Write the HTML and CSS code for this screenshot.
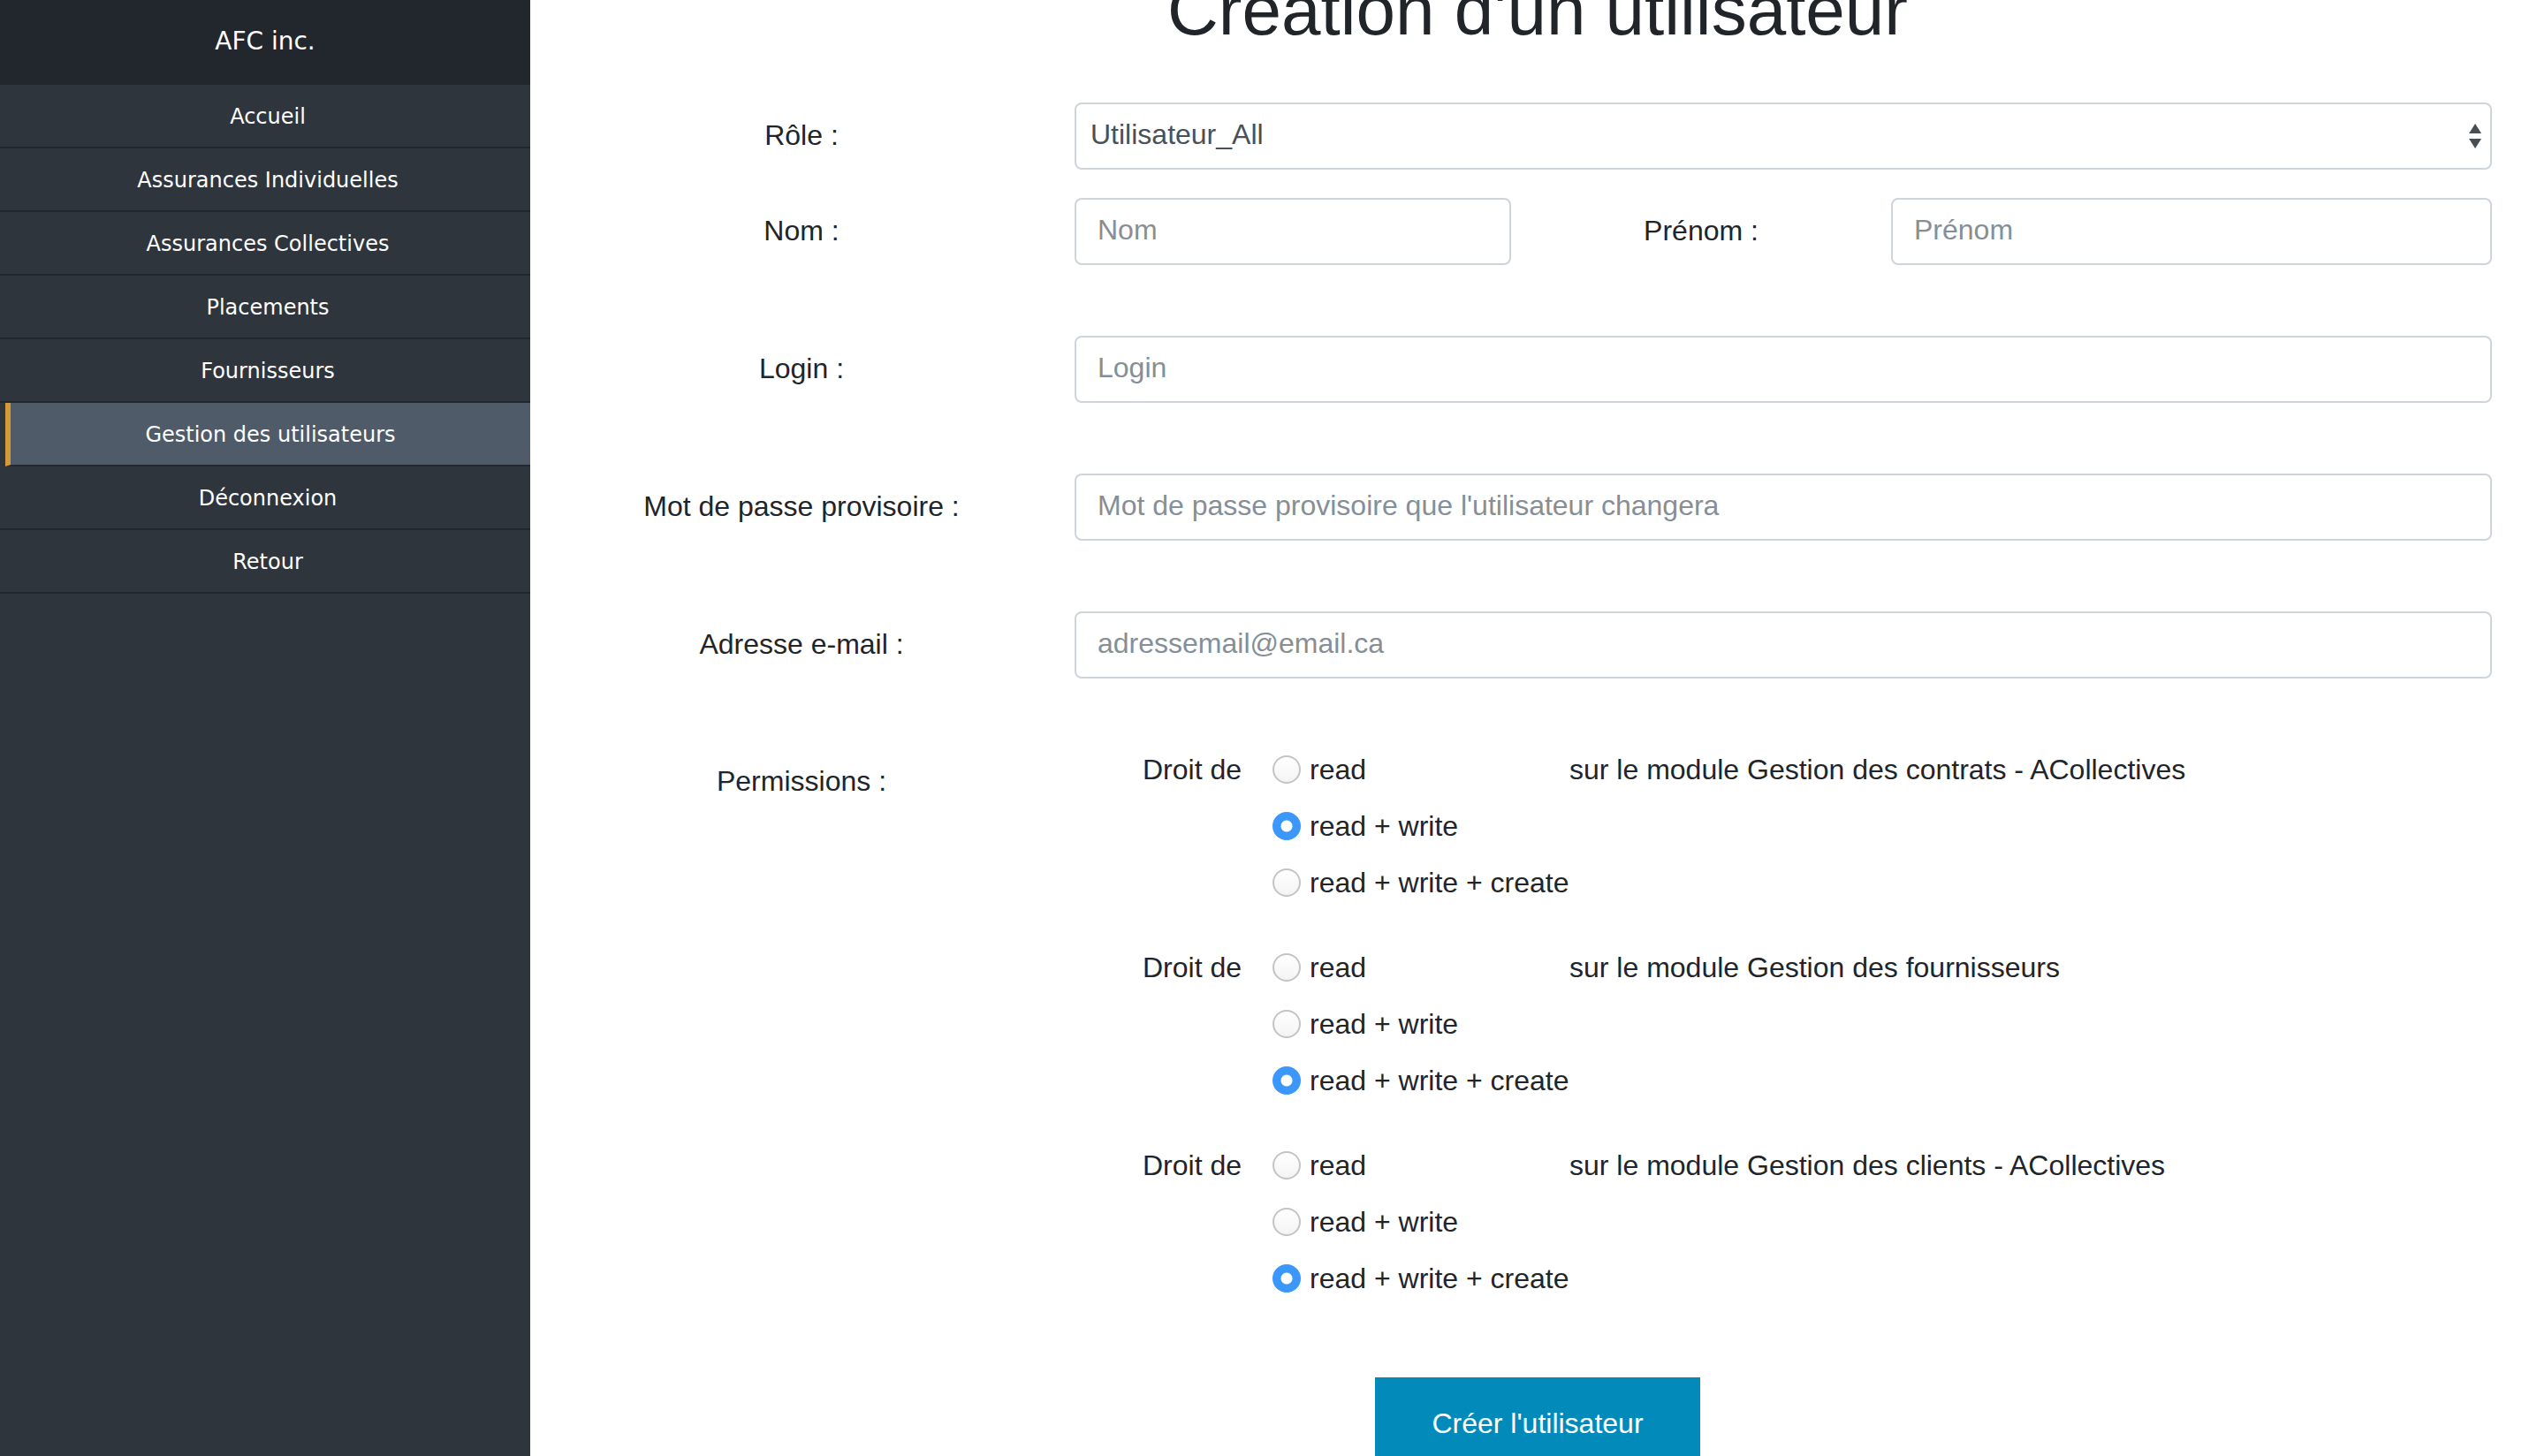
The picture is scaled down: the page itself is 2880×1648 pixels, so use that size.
FILE: index.html
```html
<!DOCTYPE html>
<html lang="fr">
<head>
<meta charset="utf-8">
<title>Création d'un utilisateur</title>
<link rel="stylesheet" href="styles.css">
</head>
<body>
<div class="layout">
  <aside class="sidebar">
    <div class="brand">AFC inc.</div>
    <nav class="nav">
      <a class="nav-item" href="#">Accueil</a>
      <a class="nav-item" href="#">Assurances Individuelles</a>
      <a class="nav-item" href="#">Assurances Collectives</a>
      <a class="nav-item" href="#">Placements</a>
      <a class="nav-item" href="#">Fournisseurs</a>
      <a class="nav-item active" href="#">Gestion des utilisateurs</a>
      <a class="nav-item" href="#">Déconnexion</a>
      <a class="nav-item" href="#">Retour</a>
    </nav>
  </aside>
  <main class="main">
    <h1 class="title">Création d'un utilisateur</h1>
    <form class="form">
      <div class="row row-role">
        <label class="lbl">Rôle :</label>
        <div class="select-wrap">
          <select class="control select"><option>Utilisateur_All</option></select>
          <svg class="arrows" width="16" height="32" viewBox="0 0 16 32"><path d="M8 2 L15 13 L1 13 Z M1 19 L15 19 L8 30 Z" fill="#494e54"/></svg>
        </div>
      </div>
      <div class="row row-name">
        <label class="lbl">Nom :</label>
        <div class="split">
          <input class="control" type="text" placeholder="Nom">
          <label class="lbl">Prénom :</label>
          <input class="control" type="text" placeholder="Prénom">
        </div>
      </div>
      <div class="row row-gap">
        <label class="lbl">Login :</label>
        <input class="control" type="text" placeholder="Login">
      </div>
      <div class="row row-gap">
        <label class="lbl">Mot de passe provisoire :</label>
        <input class="control" type="text" placeholder="Mot de passe provisoire que l'utilisateur changera">
      </div>
      <div class="row row-gap">
        <label class="lbl">Adresse e-mail :</label>
        <input class="control" type="text" placeholder="adressemail@email.ca">
      </div>
      <div class="row row-perms">
        <div class="lbl lbl-perm">Permissions :</div>
        <div class="groups">
          <div class="group">
            <div class="droit">Droit de</div>
            <div class="opts">
              <label class="opt"><input class="radio" type="radio" name="g1">read</label>
              <label class="opt"><input class="radio" type="radio" name="g1" checked>read + write</label>
              <label class="opt"><input class="radio" type="radio" name="g1">read + write + create</label>
            </div>
            <div class="module">sur le module Gestion des contrats - ACollectives</div>
          </div>
          <div class="group">
            <div class="droit">Droit de</div>
            <div class="opts">
              <label class="opt"><input class="radio" type="radio" name="g2">read</label>
              <label class="opt"><input class="radio" type="radio" name="g2">read + write</label>
              <label class="opt"><input class="radio" type="radio" name="g2" checked>read + write + create</label>
            </div>
            <div class="module">sur le module Gestion des fournisseurs</div>
          </div>
          <div class="group">
            <div class="droit">Droit de</div>
            <div class="opts">
              <label class="opt"><input class="radio" type="radio" name="g3">read</label>
              <label class="opt"><input class="radio" type="radio" name="g3">read + write</label>
              <label class="opt"><input class="radio" type="radio" name="g3" checked>read + write + create</label>
            </div>
            <div class="module">sur le module Gestion des clients - ACollectives</div>
          </div>
        </div>
      </div>
      <div class="actions">
        <button class="btn" type="button">Créer l'utilisateur</button>
      </div>
    </form>
  </main>
</div>
</body>
</html>
```

FILE: styles.css
```css
* { box-sizing: border-box; }

html, body {
  margin: 0;
  padding: 0;
  height: 100%;
  overflow: hidden;
  background: #ffffff;
}

body {
  font-family: "Liberation Sans", Arial, sans-serif;
  color: #212529;
}

.layout {
  display: flex;
  height: 1648px;
}

/* Sidebar */
.sidebar {
  width: 600px;
  flex-shrink: 0;
  background: #2e353d;
  font-family: "DejaVu Sans", Verdana, sans-serif;
  color: #ffffff;
}

.brand {
  height: 96px;
  display: flex;
  align-items: center;
  justify-content: center;
  padding-bottom: 4px;
  background: #22272e;
  font-size: 28px;
  color: #ffffff;
}

.nav {
  display: flex;
  flex-direction: column;
}

.nav-item {
  display: block;
  height: 72px;
  padding: 3px 0 0 6px;
  line-height: 67px;
  text-align: center;
  font-size: 24px;
  color: #ffffff;
  text-decoration: none;
  border-bottom: 2px solid #23282e;
}

.nav-item.active {
  margin-left: 6px;
  padding-left: 0;
  border-left: 6px solid #d49a3a;
  background: #4f5b69;
}

/* Main */
.main {
  flex: 1;
  min-width: 0;
}

.title {
  margin: -36px 0 56px;
  text-align: center;
  font-size: 80px;
  line-height: 96px;
  font-weight: 400;
  color: #212529;
}

.form {
  margin: 0;
}

.row {
  display: grid;
  grid-template-columns: 542px 1604px;
  column-gap: 38px;
  align-items: center;
  margin-left: 36px;
}

.row-name { margin-top: 32px; }
.row-gap { margin-top: 80px; }

.lbl {
  text-align: center;
  font-size: 32px;
  line-height: 48px;
  padding-bottom: 3px;
  color: #212529;
}

.control {
  display: block;
  width: 100%;
  height: 76px;
  padding: 10px 24px 14px;
  font-family: "Liberation Sans", Arial, sans-serif;
  font-size: 32px;
  line-height: 48px;
  color: #495057;
  background: #ffffff;
  border: 2px solid #ced4da;
  border-radius: 8px;
  outline: none;
}

.control::placeholder {
  color: #868e96;
  opacity: 1;
}

.select-wrap {
  position: relative;
}

.select {
  appearance: none;
  -webkit-appearance: none;
  padding: 10px 16px 14px;
}

.arrows {
  position: absolute;
  right: 11px;
  top: 22px;
  pointer-events: none;
}

.split {
  display: grid;
  grid-template-columns: 494px 430px 1fr;
  align-items: center;
}

/* Permissions */
.row-perms {
  margin-top: 71px;
  align-items: start;
}

.lbl-perm {
  padding-top: 21px;
  padding-bottom: 0;
}

.groups {
  display: flex;
  flex-direction: column;
  gap: 32px;
}

.group {
  display: grid;
  grid-template-columns: 224px 336px 1fr;
  font-size: 32px;
  line-height: 64px;
  color: #212529;
}

.droit {
  text-align: right;
  padding-right: 35px;
}

.opts {
  display: flex;
  flex-direction: column;
}

.opt {
  display: flex;
  align-items: center;
  height: 64px;
  white-space: nowrap;
}

.radio {
  appearance: none;
  -webkit-appearance: none;
  width: 32px;
  height: 32px;
  margin: 0 10px 0 0;
  border-radius: 50%;
  border: 2px solid #c4c4c4;
  background: linear-gradient(#ffffff, #f4f4f4);
  flex-shrink: 0;
}

.radio:checked {
  border: none;
  background: radial-gradient(circle, #ffffff 0 6px, #3b97f9 7px);
}

.module {
  white-space: nowrap;
}

/* Button */
.actions {
  margin-top: 80px;
  text-align: center;
}

.btn {
  padding: 28px 64px 32px;
  font-family: "Liberation Sans", Arial, sans-serif;
  font-size: 32px;
  line-height: 48px;
  color: #ffffff;
  background: #028bba;
  border: none;
  border-radius: 0;
}
```
